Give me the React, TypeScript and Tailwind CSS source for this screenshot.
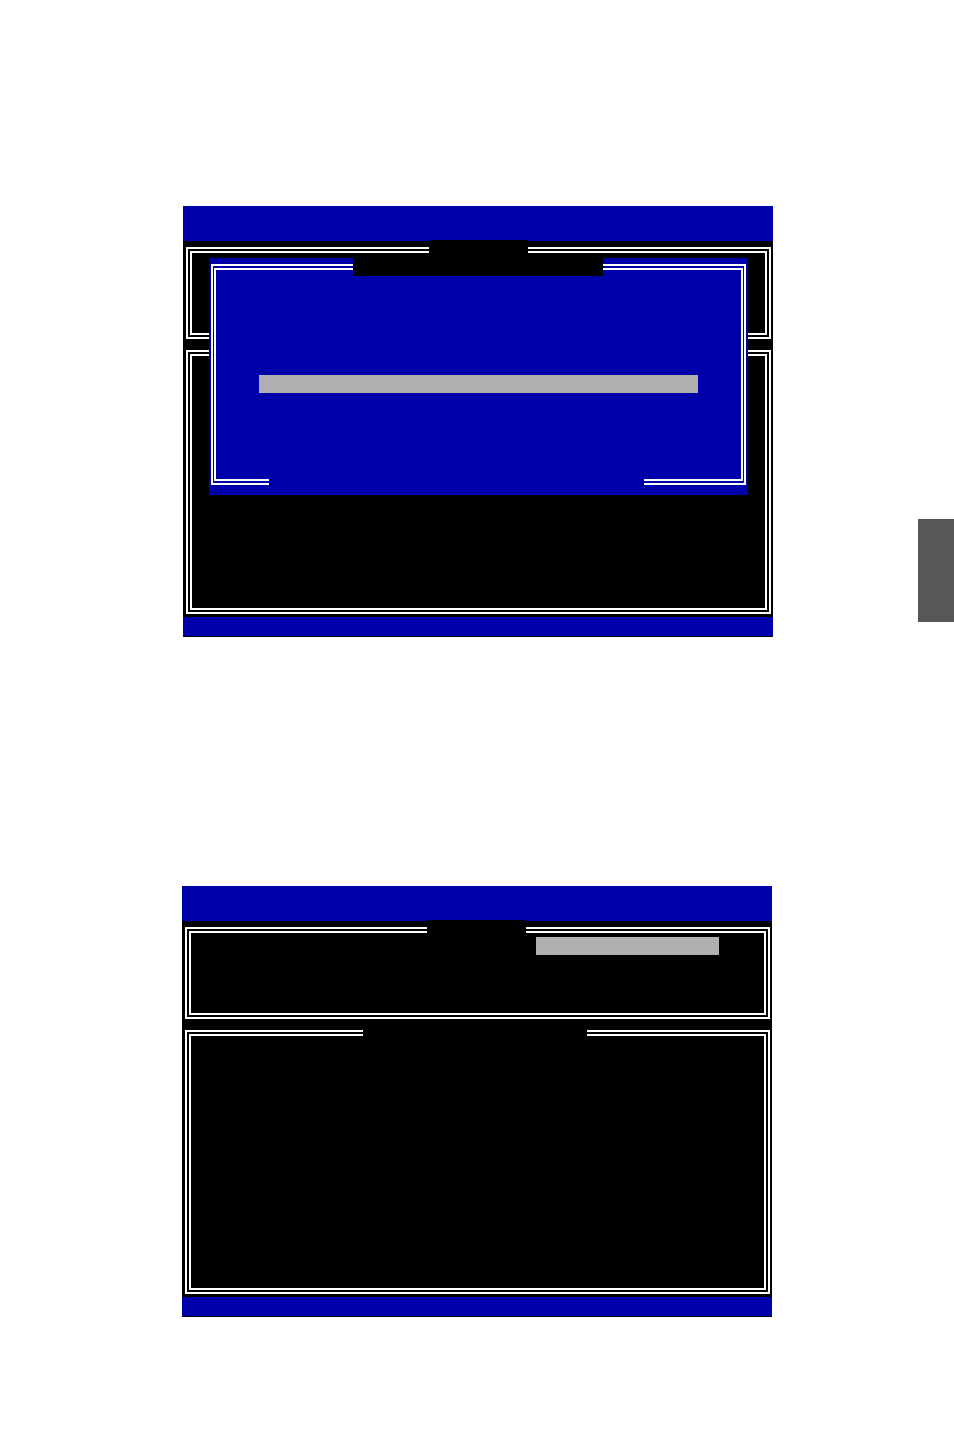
import React from "react";

// Double-line text-mode frame: two 2px white rules with a 2px black gap.
function DoubleFrame({
  className,
  children,
}: {
  className: string;
  children?: React.ReactNode;
}) {
  return (
    <div className={`border-2 border-white p-[2px] ${className}`}>
      <div className="h-full border-2 border-white">{children}</div>
    </div>
  );
}

function SetupDialog() {
  return (
    <div className="absolute left-[26px] top-[52px] h-[237px] w-[539px] bg-[#0000aa] pb-[10px] pl-[2px] pr-[2px] pt-[6px]">
      <div className="h-full border-2 border-white px-[1px] py-[2px]">
        <div className="h-full border-2 border-white pl-[43px] pt-[105px]">
          <div className="h-[18px] w-[439px] bg-[#b0b0b0]" />
        </div>
      </div>
      {/* title strip breaking the top rules */}
      <div className="absolute left-[144px] top-0 h-[18px] w-[250px] bg-black" />
      {/* gap in the bottom rules */}
      <div className="absolute left-[60px] top-[218px] h-[10px] w-[375px] bg-[#0000aa]" />
    </div>
  );
}

function BiosScreen({
  tabLeft,
  top,
  bottom,
  overlay,
}: {
  tabLeft: string;
  top?: React.ReactNode;
  bottom?: React.ReactNode;
  overlay?: React.ReactNode;
}) {
  return (
    <div className="relative flex w-[590px] flex-col">
      <div className="h-[35px] bg-[#0000aa]" />
      <div className="flex h-[376px] flex-col bg-black pl-[3px] pr-[2px] pt-[6px]">
        <DoubleFrame className="h-[92px]">{top}</DoubleFrame>
        <DoubleFrame className="mt-[11px] h-[264px]">{bottom}</DoubleFrame>
      </div>
      <div className="h-[19px] bg-[#0000aa]" />
      <div className="h-px bg-black" />
      {/* menu tab cutting the upper frame */}
      <div className={`absolute top-[34px] h-[13px] w-[99px] bg-black ${tabLeft}`} />
      {overlay}
    </div>
  );
}

export default function App() {
  return (
    <div className="relative flex h-[1452px] w-[954px] flex-col overflow-hidden bg-white pt-[206px] font-['Liberation_Sans',sans-serif]">
      <div className="ml-[183px]">
        <BiosScreen tabLeft="left-[246px]" overlay={<SetupDialog />} />
      </div>

      <div className="ml-[182px] mt-[249px]">
        <BiosScreen
          tabLeft="left-[245px]"
          top={
            <div className="pl-[345px] pt-[4px]">
              <div className="h-[18px] w-[183px] bg-[#b0b0b0]" />
            </div>
          }
          overlay={
            <div className="absolute left-[181px] top-[144px] h-[7px] w-[224px] bg-black" />
          }
        />
      </div>

      {/* chapter thumb tab on the page edge */}
      <div className="absolute left-[918px] top-[519px] h-[103px] w-[36px] bg-[#575757]" />
    </div>
  );
}
